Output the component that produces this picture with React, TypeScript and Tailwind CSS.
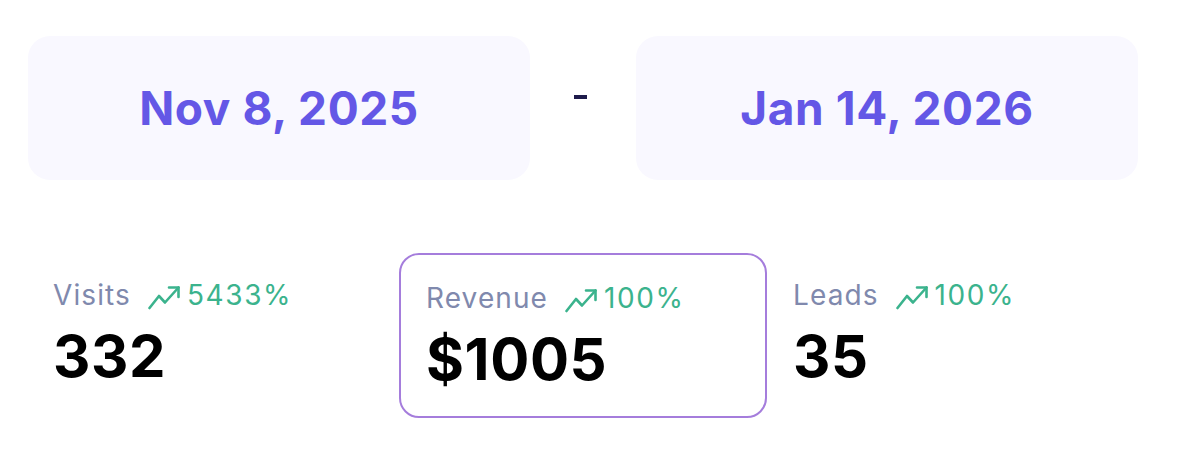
import React from "react";

function Trend() {
  return (
    <svg width="32" height="25" viewBox="0 0 32 25" fill="none" stroke="#3bb38d" strokeWidth="2.6" strokeLinecap="round" strokeLinejoin="round" className="shrink-0">
      <path d="M1.5 23 L11 11 L17 17.5 L30.5 2.5" />
      <path d="M21 2.5 H30.5 V12" />
    </svg>
  );
}

function Stat({ label, pct, value, active }: { label: string; pct: string; value: string; active?: boolean }) {
  return (
    <div
      className={
        active
          ? "w-[368px] h-[165px] border-2 border-[#a57ddc] rounded-[20px] pl-[25px] pt-[27px]"
          : "w-[368px] h-[165px] border-2 border-transparent rounded-[20px] pl-[24px] pt-[24px]"
      }
    >
      <div className="flex items-center h-[32px]">
        <span className="text-[28px] leading-[32px] text-[#8089ad] tracking-[1.1px]">{label}</span>
        <span className="ml-[17px] mt-[4px]"><Trend /></span>
        <span className="ml-[7px] text-[28px] leading-[32px] text-[#3bb38d] tracking-[1.6px]">{pct}</span>
      </div>
      <div className="mt-[16px] text-[58px] leading-[58px] font-bold text-black tracking-[0.6px]">{value}</div>
    </div>
  );
}

export default function App() {
  return (
    <div className="w-[1186px] h-[463px] bg-white" style={{ fontFamily: "Inter, 'Noto Sans', sans-serif" }}>
      <div className="flex items-start pt-[36px] pl-[28px]">
        <div className="w-[502px] h-[144px] rounded-[22px] bg-[#f9f8ff] flex items-center justify-center text-[46px] font-bold text-[#6457e6] tracking-[0.6px]">
          Nov 8, 2025
        </div>
        <div className="w-[106px] flex justify-center pr-[5px] pt-[59px]">
          <div className="w-[13px] h-[4px] bg-[#1e1b4b]" />
        </div>
        <div className="w-[502px] h-[144px] rounded-[22px] bg-[#f9f8ff] flex items-center justify-center text-[46px] font-bold text-[#6457e6] tracking-[0.6px]">
          Jan 14, 2026
        </div>
      </div>
      <div className="flex pt-[73px] pl-[27px]">
        <div className="w-[372px]">
          <Stat label="Visits" pct="5433%" value="332" />
        </div>
        <Stat label="Revenue" pct="100%" value="$1005" active />
        <Stat label="Leads" pct="100%" value="35" />
      </div>
    </div>
  );
}
